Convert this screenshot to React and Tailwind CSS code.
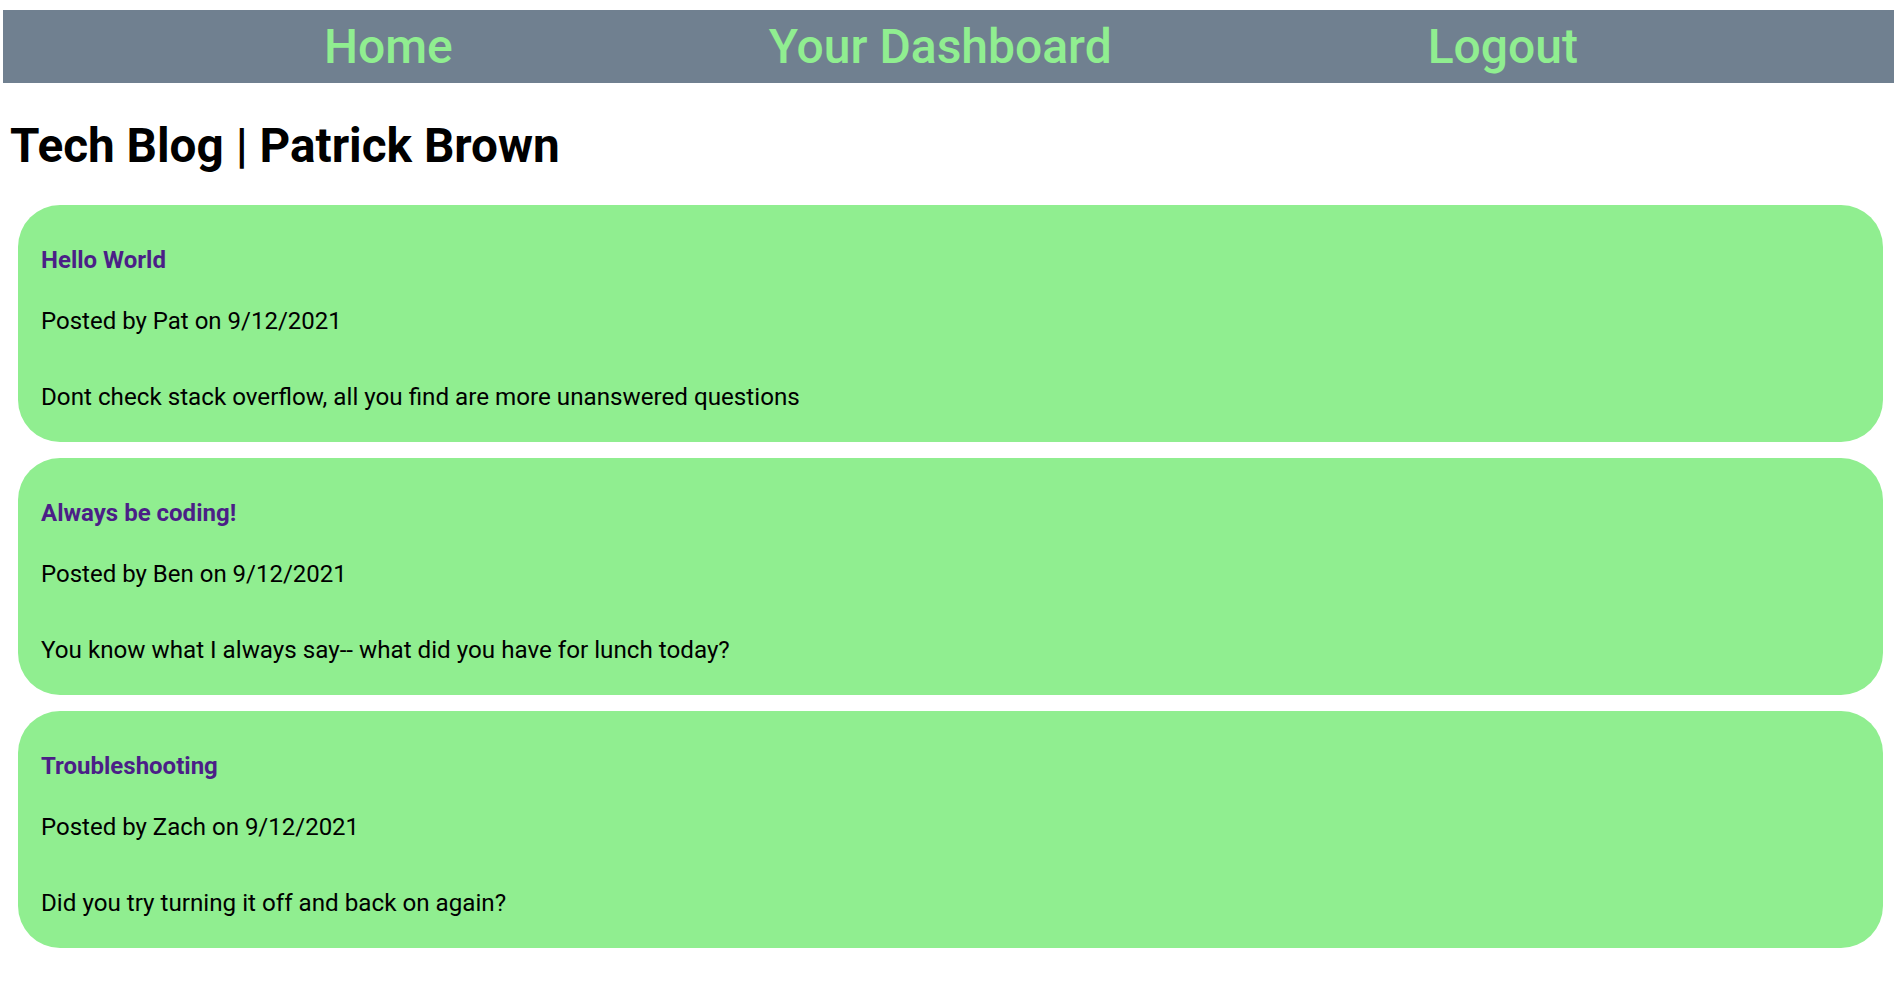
const posts = [
  {
    id: 1,
    title: 'Hello World',
    author: 'Pat',
    date: '9/12/2021',
    body: 'Dont check stack overflow, all you find are more unanswered questions',
  },
  {
    id: 2,
    title: 'Always be coding!',
    author: 'Ben',
    date: '9/12/2021',
    body: 'You know what I always say-- what did you have for lunch today?',
  },
  {
    id: 3,
    title: 'Troubleshooting',
    author: 'Zach',
    date: '9/12/2021',
    body: 'Did you try turning it off and back on again?',
  },
];

const links = ['Home', 'Your Dashboard', 'Logout'];

const PostCard = ({ post }) => (
  <div className="bg-[#90ee90] rounded-[42px] pt-[41px] pb-[31px] pl-[23px] pr-6">
    <h3 className="text-[24px] leading-[28px] font-bold text-[#4b1f87]">{post.title}</h3>
    <p className="mt-[33px] text-[24px] leading-[28px] text-black">
      Posted by {post.author} on {post.date}
    </p>
    <p className="mt-[48px] text-[24.2px] leading-[28px] text-black">{post.body}</p>
  </div>
);

export default function App() {
  return (
    <div className="min-h-screen bg-white font-['Roboto',_'Noto_Sans',_sans-serif]">
      <div className="pt-[10px] pl-[3px]">
        <nav className="h-[73px] bg-[#708090] flex items-center justify-evenly pl-[5px]">
          {links.map((link) => (
            <a
              key={link}
              href="#"
              className="text-[48px] leading-[56px] font-medium text-[#90ee90]"
            >
              {link}
            </a>
          ))}
        </nav>
      </div>
      <h1 className="mt-[35px] pl-[10px] text-[47.7px] leading-[56px] font-bold text-black">
        Tech Blog | Patrick Brown
      </h1>
      <div className="mt-[31px] pl-[18px] pr-[11px] flex flex-col gap-4">
        {posts.map((post) => (
          <PostCard key={post.id} post={post} />
        ))}
      </div>
    </div>
  );
}
